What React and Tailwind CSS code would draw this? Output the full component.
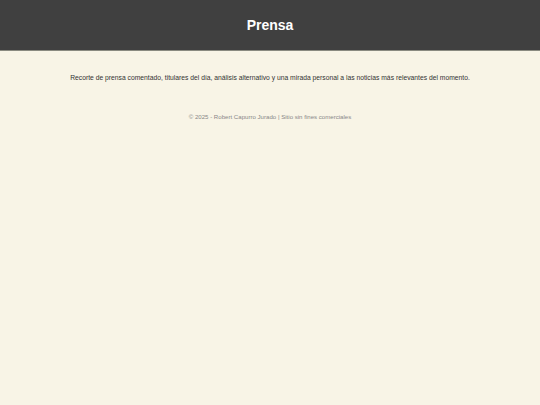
import React from 'react';

const App = () => {
  return (
    <div className="min-h-screen bg-[#f8f4e6] font-['Liberation_Sans',Arial,sans-serif]">
      {/* Cabecera */}
      <header className="h-[51px] bg-[#404040] border-b border-[#8a8a80] flex items-center justify-center">
        <h1 className="text-[14px] font-bold text-white">Prensa</h1>
      </header>

      <main className="pt-[22px] text-center">
        <p className="text-[6.75px] leading-[9px] text-[#333333]">
          Recorte de prensa comentado, titulares del día, análisis alternativo y una mirada personal a las noticias más relevantes del momento.
        </p>
      </main>

      <footer className="mt-[31px] text-center">
        <p className="text-[6.1px] leading-[8px] text-[#888888]">
          © 2025 - Robert Capurro Jurado | Sitio sin fines comerciales
        </p>
      </footer>
    </div>
  );
};

export default App;
